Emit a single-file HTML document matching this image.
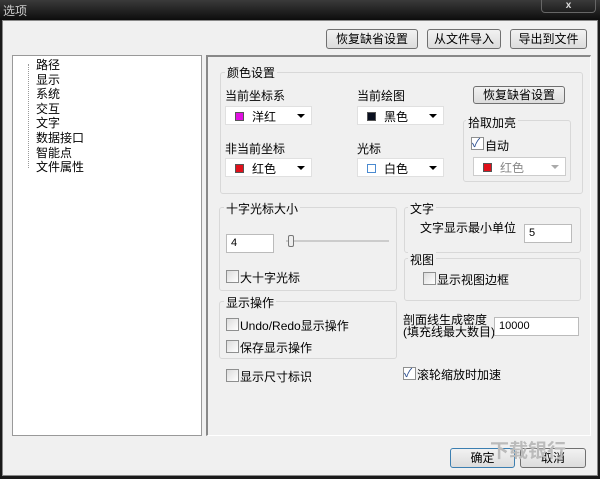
<!DOCTYPE html>
<html><head><meta charset="utf-8"><style>
*{margin:0;padding:0;box-sizing:border-box}
body{width:600px;height:479px;background:#1a1a1a;font-family:"Liberation Sans","Noto Sans CJK SC",sans-serif;font-size:12px;color:#000;position:relative;overflow:hidden}
.a{position:absolute}
.title{left:0;top:0;width:600px;height:20px;background:linear-gradient(#3a3a3a,#0d0d0d);color:#ccc;font-size:12px;padding:2px 3px}
.x{left:541px;top:0;width:55px;height:13px;border:1px solid #666;border-top:none;border-radius:0 0 4px 4px;color:#ddd;font-size:10px;text-align:center;line-height:11px;font-weight:bold}
.frame{left:2px;top:20px;width:596px;height:456px;background:#f0f0f0;border:1px solid #888}
.btn{position:absolute;height:20px;border:1px solid #707070;border-radius:3px;background:linear-gradient(#f2f2f2,#dcdcdc);text-align:center;line-height:18px;font-size:12px}
.tree{left:12px;top:55px;width:190px;height:381px;background:#fff;border:1px solid #999}
.tree div{position:absolute;left:23px;line-height:14px}
.panel{left:206px;top:55px;width:385px;height:381px;border-left:2px solid #888;border-top:2px solid #888;border-right:1px solid #fff;border-bottom:1px solid #fff}
.grp{position:absolute;border:1px solid #d8d8d8;border-radius:3px}
.gl{position:absolute;background:#f0f0f0;padding:0 2px}
.combo{position:absolute;width:87px;height:19px;background:#fff;border:1px solid #e0e0e0}
.combo .sw{position:absolute;left:9px;top:5px;width:9px;height:9px;border:1px solid #555}
.combo .t{position:absolute;left:26px;top:1px}
.combo .ar{position:absolute;right:6px;top:7px;border-left:4px solid transparent;border-right:4px solid transparent;border-top:4px solid #000}
.cb{position:absolute;width:13px;height:13px;border:1px solid #8e8f8f;background:linear-gradient(135deg,#dcdcdc,#fff)}
.inp{position:absolute;height:19px;background:#fff;border:1px solid #bbb;padding-left:4px;font-size:11px;line-height:17px}
</style></head><body>
<div class="a title">选项</div>
<div class="a x">x</div>
<div class="a frame"></div>
<div class="btn" style="left:326px;top:29px;width:92px">恢复缺省设置</div>
<div class="btn" style="left:427px;top:29px;width:74px">从文件导入</div>
<div class="btn" style="left:510px;top:29px;width:77px">导出到文件</div>
<div class="a tree">
<div style="top:2px">路径</div><div style="top:16.6px">显示</div><div style="top:31.2px">系统</div><div style="top:45.8px">交互</div><div style="top:60.4px">文字</div><div style="top:75px">数据接口</div><div style="top:89.6px">智能点</div><div style="top:104.2px">文件属性</div>
<span class="a" style="left:15px;top:8px;width:1px;height:104px;border-left:1px dotted #999"></span>
</div>
<div class="a panel"></div>
<div class="grp" style="left:220px;top:72px;width:363px;height:122px"></div>
<div class="gl" style="left:225px;top:64px">颜色设置</div>
<div class="a" style="left:225px;top:87px">当前坐标系</div>
<div class="a" style="left:357px;top:87px">当前绘图</div>
<div class="btn" style="left:473px;top:86px;width:92px;height:18px;line-height:16px">恢复缺省设置</div>
<div class="combo" style="left:225px;top:106px"><span class="sw" style="background:#e010e0"></span><span class="t">洋红</span><span class="ar"></span></div>
<div class="combo" style="left:357px;top:106px"><span class="sw" style="background:#0a1020"></span><span class="t">黑色</span><span class="ar"></span></div>
<div class="grp" style="left:463px;top:120px;width:108px;height:62px"></div>
<div class="gl" style="left:466px;top:114px">拾取加亮</div>
<div class="cb" style="left:471px;top:137px;background:#fff"></div><div class="a" style="left:472px;top:134px;color:#2a4d8f">✓</div>
<div class="a" style="left:485px;top:137px">自动</div>
<div class="combo" style="left:473px;top:157px;width:93px;border-color:#ccc"><span class="sw" style="background:#e0101a"></span><span class="t" style="color:#888">红色</span><span class="ar" style="border-top-color:#aaa"></span></div>
<div class="a" style="left:225px;top:140px">非当前坐标</div>
<div class="a" style="left:357px;top:140px">光标</div>
<div class="combo" style="left:225px;top:158px"><span class="sw" style="background:#e0101a"></span><span class="t">红色</span><span class="ar"></span></div>
<div class="combo" style="left:357px;top:158px"><span class="sw" style="background:#fff;border-color:#4a8ad0"></span><span class="t">白色</span><span class="ar"></span></div>

<div class="grp" style="left:219px;top:207px;width:178px;height:84px"></div>
<div class="gl" style="left:224px;top:200px">十字光标大小</div>
<div class="inp" style="left:226px;top:234px;width:48px">4</div>
<div class="a" style="left:286px;top:240px;width:103px;height:2px;background:#ccc"></div>
<div class="a" style="left:288px;top:235px;width:6px;height:12px;border:1px solid #777;border-radius:2px;background:#eee"></div>
<div class="cb" style="left:226px;top:270px"></div><div class="a" style="left:240px;top:269px">大十字光标</div>

<div class="grp" style="left:404px;top:207px;width:177px;height:46px"></div>
<div class="gl" style="left:408px;top:200px">文字</div>
<div class="a" style="left:420px;top:219px">文字显示最小单位</div>
<div class="inp" style="left:524px;top:224px;width:48px">5</div>
<div class="grp" style="left:404px;top:258px;width:177px;height:43px"></div>
<div class="gl" style="left:408px;top:251px">视图</div>
<div class="cb" style="left:423px;top:272px"></div><div class="a" style="left:437px;top:271px">显示视图边框</div>

<div class="grp" style="left:219px;top:301px;width:178px;height:58px"></div>
<div class="gl" style="left:224px;top:294px">显示操作</div>
<div class="cb" style="left:226px;top:318px"></div><div class="a" style="left:240px;top:317px">Undo/Redo显示操作</div>
<div class="cb" style="left:226px;top:340px"></div><div class="a" style="left:240px;top:339px">保存显示操作</div>
<div class="a" style="left:403px;top:314px;line-height:12px">剖面线生成密度<br>(填充线最大数目)</div>
<div class="inp" style="left:494px;top:317px;width:85px">10000</div>
<div class="cb" style="left:226px;top:369px"></div><div class="a" style="left:240px;top:368px">显示尺寸标识</div>
<div class="cb" style="left:403px;top:367px;background:#fff"></div><div class="a" style="left:404px;top:364px;color:#2a4d8f">✓</div>
<div class="a" style="left:417px;top:366px">滚轮缩放时加速</div>

<div class="btn" style="left:450px;top:448px;width:65px;border-color:#3c7fb1">确定</div>
<div class="btn" style="left:520px;top:448px;width:66px">取消</div>
<div class="a" style="left:490px;top:436px;font-size:19px;color:#bbb;font-weight:bold">下载银行</div>
</body></html>
